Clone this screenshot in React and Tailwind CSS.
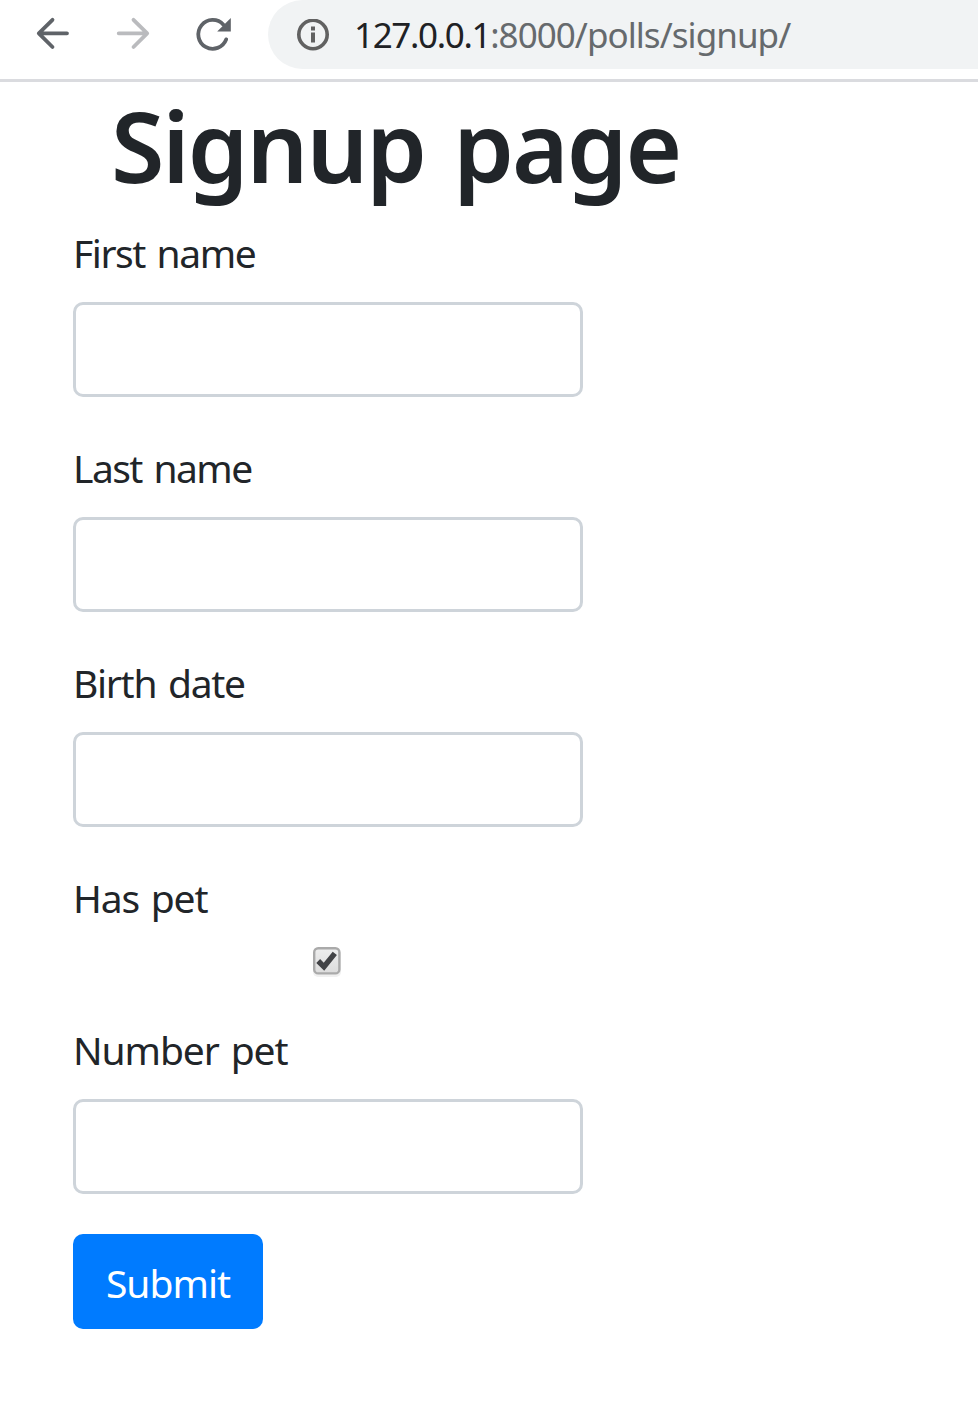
function BackIcon() {
  return (
    <svg className="h-10 w-10" viewBox="0 0 40 40" fill="none" stroke="#5f6368" strokeWidth="3.8" strokeLinecap="round" strokeLinejoin="round">
      <path d="M35 19.3H7M20.5 5.8L6.8 19.3L20.5 33" />
    </svg>
  );
}

function ForwardIcon() {
  return (
    <svg className="h-10 w-10" viewBox="0 0 40 40" fill="none" stroke="#babbbe" strokeWidth="3.8" strokeLinecap="round" strokeLinejoin="round">
      <path d="M6.7 19.3H34M21.5 5.8L35.2 19.3L21.5 33" />
    </svg>
  );
}

function ReloadIcon() {
  return (
    <svg className="h-10 w-10" viewBox="0 0 40 40" fill="none">
      <path d="M34.2 25.4A14.4 14.4 0 1 1 31.4 10.7" stroke="#5f6368" strokeWidth="3.8" strokeLinecap="round" />
      <path d="M38.8 4V17.5H25.2Z" fill="#5f6368" />
    </svg>
  );
}

function InfoIcon() {
  return (
    <svg className="h-8 w-8" viewBox="0 0 32 32" fill="none">
      <circle cx="16" cy="15.5" r="14.2" stroke="#616161" strokeWidth="3.6" />
      <path d="M14 7.5h4v4h-4zM14 13.5h4v10h-4z" fill="#616161" />
    </svg>
  );
}

function Toolbar() {
  return (
    <header className="flex h-[82px] items-start border-b-[3px] border-[#dadbdf] bg-white">
      <nav className="flex gap-10 pt-3.5 pl-8">
        <button className="h-10 w-10" aria-label="Back"><BackIcon /></button>
        <button className="h-10 w-10" aria-label="Forward"><ForwardIcon /></button>
        <button className="h-10 w-10" aria-label="Reload"><ReloadIcon /></button>
      </nav>
      <div className="ml-9 flex h-[69px] flex-1 items-center rounded-l-full bg-[#f1f3f4] pl-[29px]">
        <InfoIcon />
        <span className="ml-[25px] text-[35px] leading-[48px] whitespace-nowrap text-[#666a6d]">
          <span className="tracking-[-1.35px] text-[#202124]">127.0.0.1</span><span className="tracking-[-0.95px]">:8000/polls/signup/</span>
        </span>
      </div>
    </header>
  );
}

function Field({ label, tracking }) {
  return (
    <label className="mb-10 block">
      <span className={`mb-[19px] block h-[61px] pt-px leading-[60px] [word-spacing:3px] ${tracking}`}>{label}</span>
      <input className="block h-[95px] w-full rounded-[10px] border-3 border-[#ced4da] bg-white px-[30px] outline-none" type="text" />
    </label>
  );
}

function Checkbox() {
  return (
    <svg className="ml-60 h-8 w-7" viewBox="0 0 28 32">
      <defs>
        <linearGradient id="face" x1="0" y1="0" x2="0" y2="1">
          <stop offset="0" stopColor="#eeeeee" />
          <stop offset="1" stopColor="#dcdcdc" />
        </linearGradient>
      </defs>
      <rect x="0" y="2" width="28" height="28" rx="5" fill="#f0f0f0" />
      <rect x="1.2" y="1.2" width="25.2" height="25.2" rx="4" fill="url(#face)" stroke="#aaaaaa" strokeWidth="2.4" />
      <path d="M5.2 14L11 19.8L21.8 6.4" fill="none" stroke="#424346" strokeWidth="5.4" />
    </svg>
  );
}

export default function App() {
  return (
    <div className="min-h-[1419px] w-full overflow-hidden bg-white font-['Noto_Sans','Open_Sans',sans-serif]">
      <Toolbar />
      <main className="ml-[73px] w-[510px] text-[39px] text-[#212529]">
        <h1 className="mb-[17px] h-[123px] pt-[3px] pl-[38px] text-[97px] leading-[120px] font-semibold tracking-[-2px] whitespace-nowrap [word-spacing:5px]">Signup page</h1>
        <form>
          <Field label="First name" tracking="tracking-[-1.45px]" />
          <Field label="Last name" tracking="tracking-[-1.55px]" />
          <Field label="Birth date" tracking="tracking-[-1.3px]" />
          <div className="h-[152px]">
            <span className="mb-[19px] block h-[61px] pt-px leading-[60px] tracking-[-1.2px] [word-spacing:3px]">Has pet</span>
            <Checkbox />
          </div>
          <Field label="Number pet" tracking="tracking-[-1.1px]" />
          <button type="button" className="flex h-[95px] w-[190px] items-center justify-center rounded-[10px] bg-[#007bff] text-white">
            <span className="pt-0.5 leading-[60px] tracking-[-1px]">Submit</span>
          </button>
        </form>
      </main>
    </div>
  );
}
